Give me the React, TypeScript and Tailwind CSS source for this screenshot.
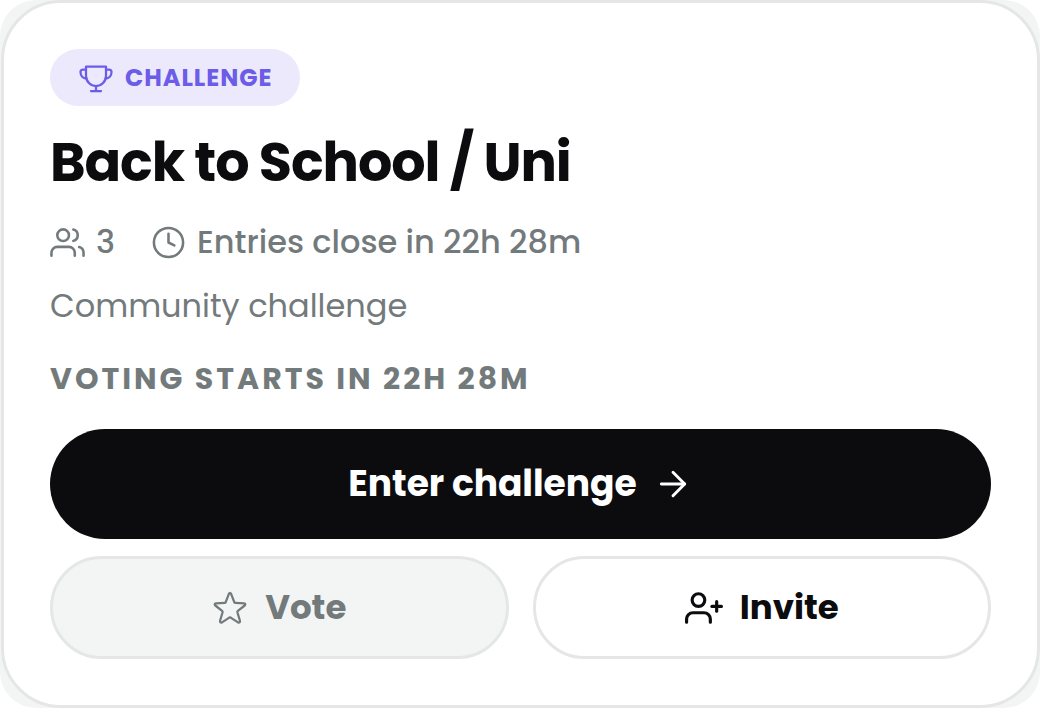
import React from "react";
import { FiArrowRight, FiClock, FiUserPlus, FiUsers } from "react-icons/fi";

const TrophyIcon: React.FC = () => (
  <svg
    className="size-9"
    viewBox="0 0 36 36"
    fill="none"
    stroke="currentColor"
    strokeWidth="2.25"
    strokeLinecap="round"
    strokeLinejoin="round"
    aria-hidden="true"
  >
    <path d="M8 6.5h20v9.5a10 10 0 0 1-20 0z" />
    <path d="M8 9.5H5A2.5 2.5 0 0 0 2.5 12c0 4 2.5 6.5 6 6.5" />
    <path d="M28 9.5h3a2.5 2.5 0 0 1 2.5 2.5c0 4-2.5 6.5-6 6.5" />
    <path d="M18 26v5M13 31h10" />
  </svg>
);

const StarIcon: React.FC = () => (
  <svg
    className="size-9"
    viewBox="0 0 36 36"
    fill="none"
    stroke="currentColor"
    strokeWidth="2.25"
    strokeLinecap="round"
    strokeLinejoin="round"
    aria-hidden="true"
  >
    <path d="M16.9 3.8Q18 1.8 19.1 3.8L22.3 12.2Q22.6 12.9 23.4 12.9L32 13.4Q34.2 13.8 32.7 15.5L25.9 20.8Q25.2 21.4 25.4 22.2L28 31Q28 33.2 26 32.4L18.7 27.6Q18 27.2 17.3 27.6L10 32.4Q8 33.2 8 31L10.6 22.2Q10.8 21.4 10.1 20.8L3.3 15.5Q1.8 13.8 4 13.4L12.6 12.9Q13.4 12.9 13.7 12.2Z" />
  </svg>
);

const Badge: React.FC<{ children: React.ReactNode }> = ({ children }) => (
  <span className="flex h-[57px] items-center gap-[11px] self-start rounded-full bg-[#ebe9fb] px-7 text-2xl font-bold tracking-[0.04em] text-[#6c5ce7]">
    <TrophyIcon />
    {children}
  </span>
);

const Meta: React.FC = () => (
  <div className="mt-5 flex h-12 items-center gap-9 text-[32px] font-medium">
    <span className="flex items-center gap-[11px]">
      <FiUsers className="size-[35px] stroke-[1.75]" aria-hidden="true" />3
    </span>
    <span className="flex items-center gap-[11px]">
      <FiClock className="size-[35px] stroke-[1.75]" aria-hidden="true" />
      Entries close in 22h 28m
    </span>
  </div>
);

const Actions: React.FC = () => (
  <div className="mt-[26px] grid grid-cols-2 gap-x-6 gap-y-[17px] font-bold">
    <button
      type="button"
      className="col-span-2 flex h-[110px] items-center justify-center gap-4 rounded-full bg-[#0c0c0e] text-4xl text-white"
    >
      Enter challenge
      <FiArrowRight className="size-10 stroke-[1.75]" aria-hidden="true" />
    </button>
    <button
      type="button"
      disabled
      className="flex h-[103px] items-center justify-center gap-[17px] rounded-full border-3 border-[#e5e7e6] bg-[#f3f5f4] text-[34px]"
    >
      <StarIcon />
      Vote
    </button>
    <button
      type="button"
      className="flex h-[103px] items-center justify-center gap-[17px] rounded-full border-3 border-[#e5e7e6] bg-white text-[34px] text-[#0c0c0e]"
    >
      <FiUserPlus className="size-[38px] stroke-2" aria-hidden="true" />
      Invite
    </button>
  </div>
);

const App: React.FC = () => {
  return (
    <main className="rounded-[36px] bg-[#f3f5f4] pl-px font-['Poppins','Inter',sans-serif]">
      <article className="flex flex-col rounded-[60px] border-3 border-[#e5e7e6] bg-white p-[46px] text-[#737a7c]">
        <Badge>CHALLENGE</Badge>
        <h1 className="mt-5 text-[54px] leading-[72px] font-bold tracking-[-0.02em] text-[#0c0c0e]">
          Back to School / Uni
        </h1>
        <Meta />
        <p className="mt-4 text-[32px] leading-[48px]">Community challenge</p>
        <p className="mt-[25px] text-3xl leading-[48px] font-bold tracking-widest uppercase">
          Voting starts in 22h 28m
        </p>
        <Actions />
      </article>
    </main>
  );
};

export default App;
